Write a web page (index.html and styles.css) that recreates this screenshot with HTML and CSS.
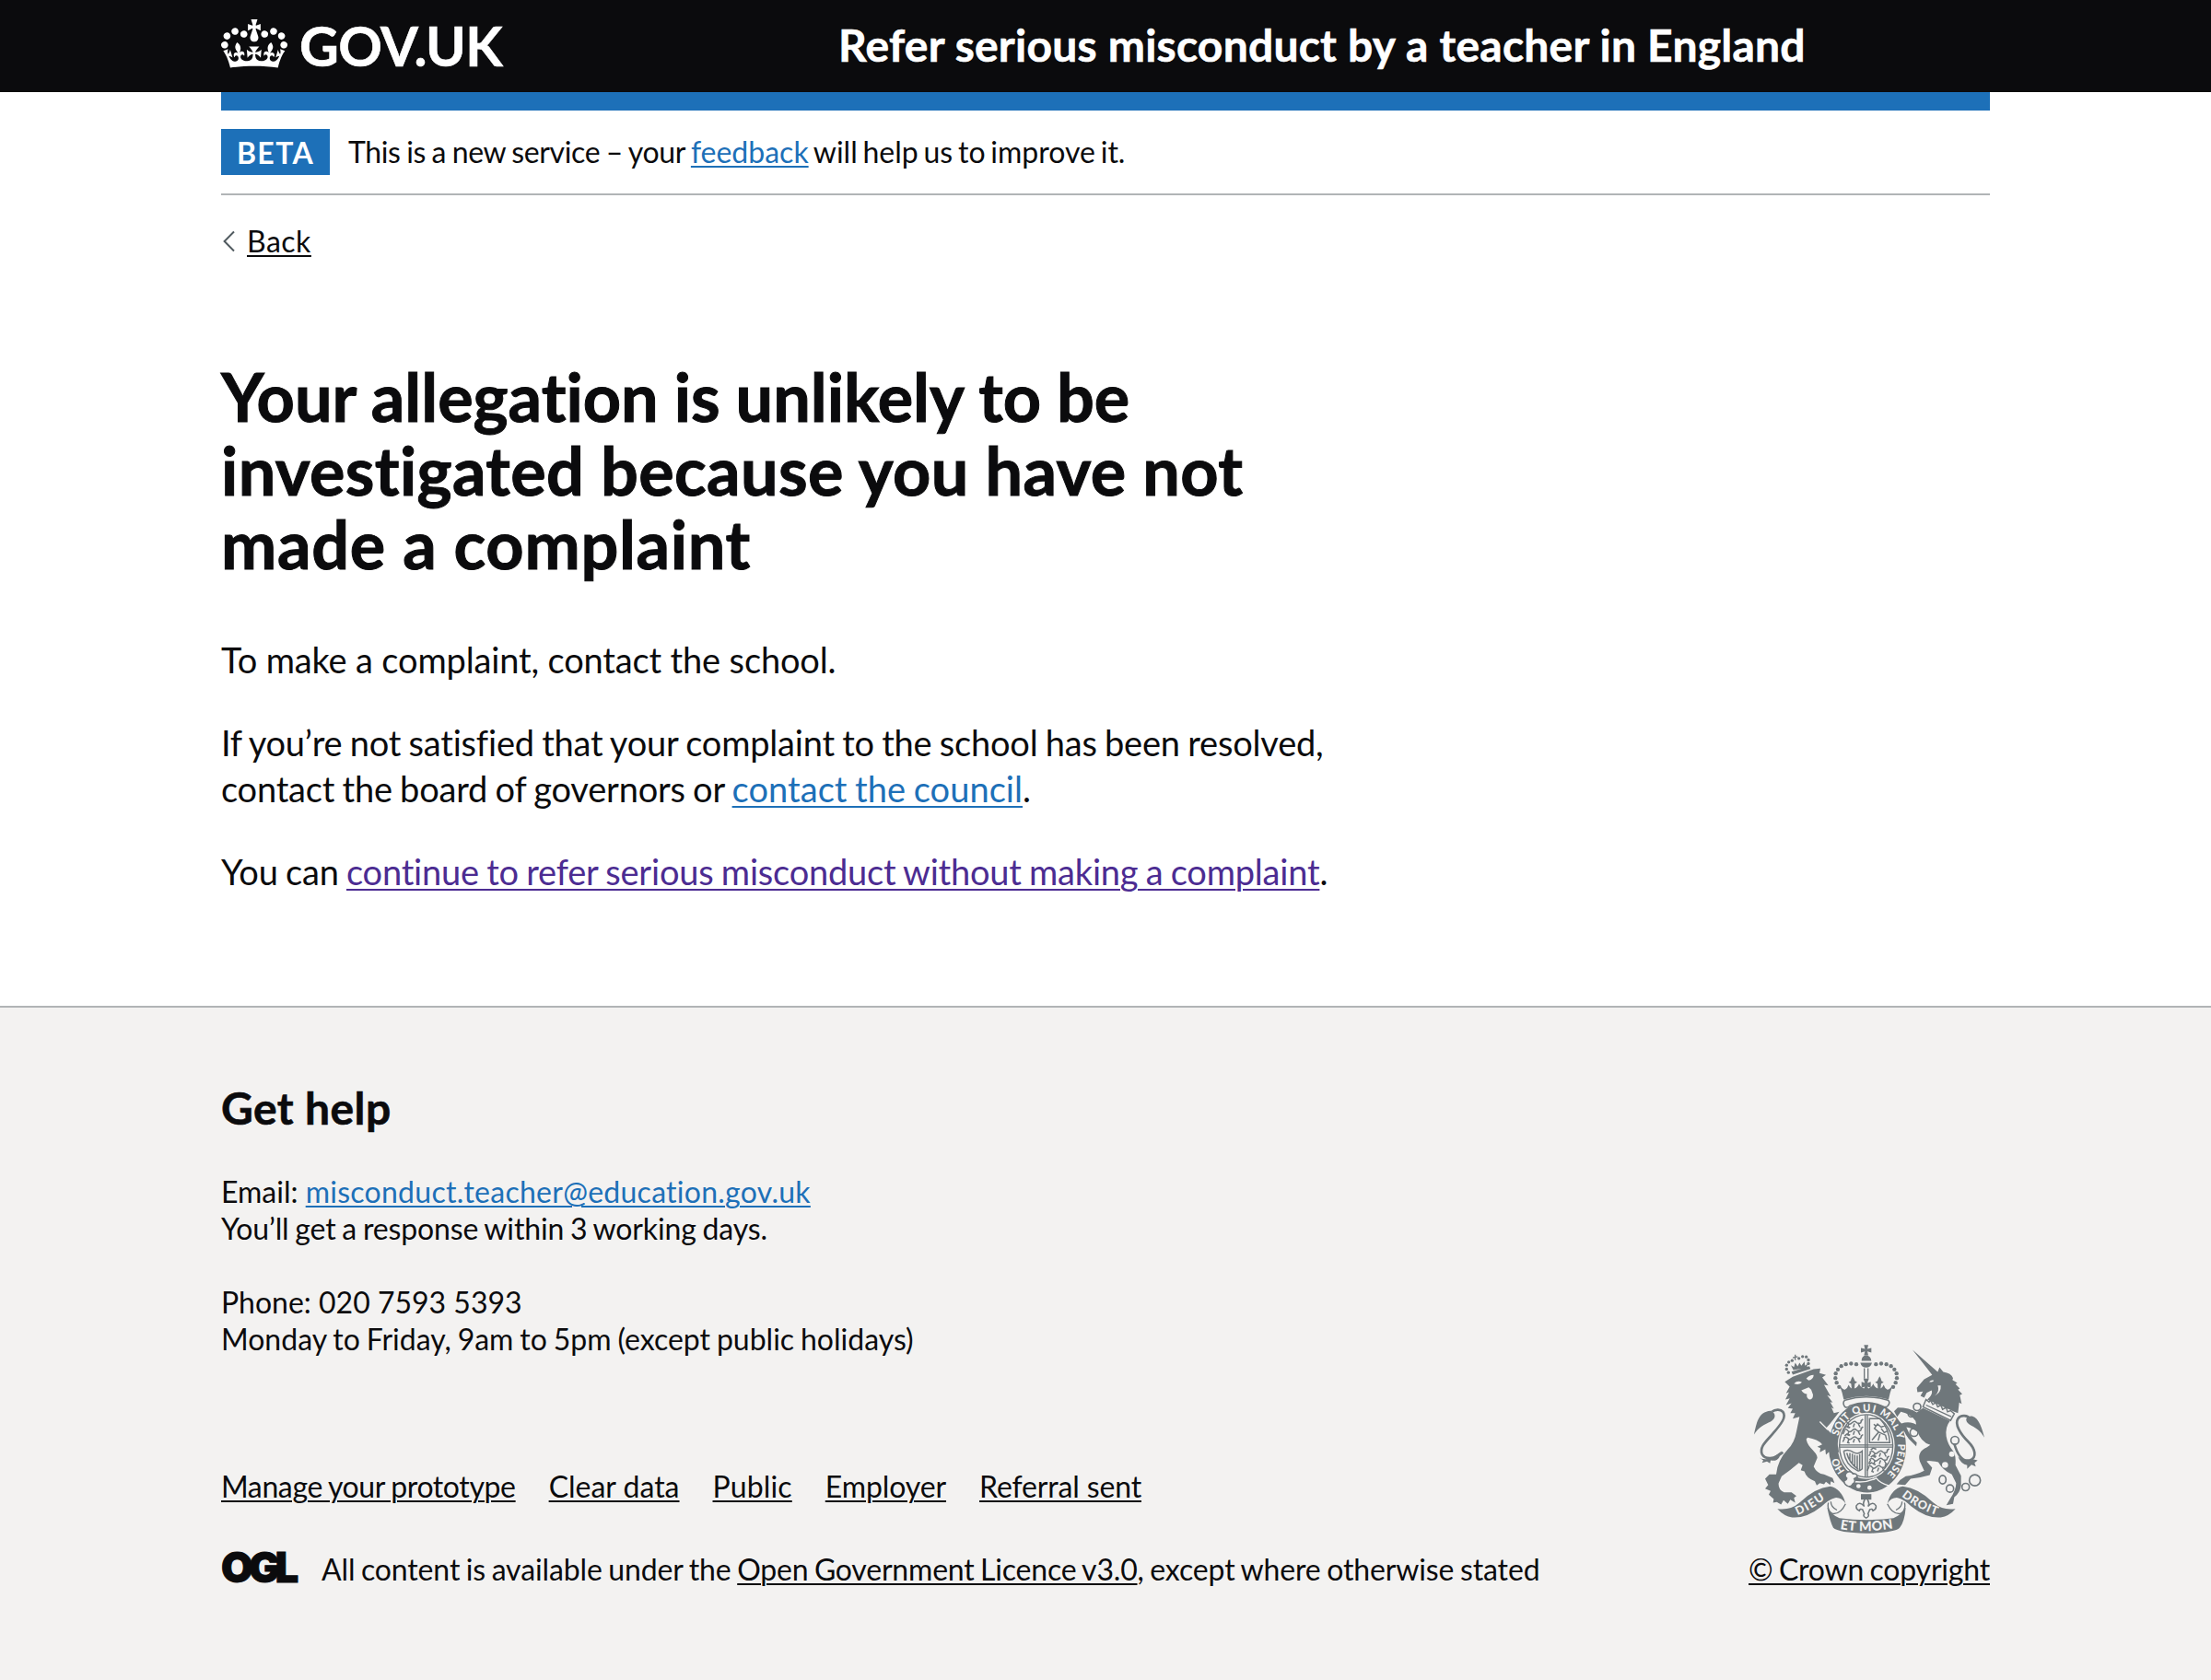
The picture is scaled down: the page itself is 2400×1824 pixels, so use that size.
FILE: index.html
```html
<!DOCTYPE html>
<html lang="en">
<head>
<meta charset="utf-8">
<title>Refer serious misconduct by a teacher in England</title>
<link rel="stylesheet" href="styles.css">
</head>
<body>
<header class="header">
  <div class="container header__row">
    <a class="header__logo" href="#">
      <svg class="header__crown" viewBox="0 0 132 97" aria-hidden="true"><path fill="currentColor" d="M25 30.2c3.5 1.5 7.7-.2 9.1-3.7 1.5-3.6-.2-7.8-3.9-9.2-3.6-1.4-7.6.3-9.1 3.9-1.4 3.5.3 7.5 3.9 9zM9 39.5c3.6 1.5 7.8-.2 9.2-3.7 1.5-3.6-.2-7.8-3.9-9.1-3.6-1.5-7.6.2-9.1 3.8-1.4 3.5.3 7.5 3.8 9zM4.4 57.2c3.5 1.5 7.7-.2 9.1-3.8 1.5-3.6-.2-7.7-3.9-9.1-3.5-1.5-7.6.3-9.1 3.8-1.4 3.5.3 7.6 3.9 9.1zm38.3-21.4c3.5 1.5 7.7-.2 9.1-3.8 1.5-3.6-.2-7.7-3.9-9.1-3.6-1.5-7.6.3-9.1 3.8-1.3 3.6.4 7.7 3.9 9.1zm64.4-5.6c-3.6 1.5-7.8-.2-9.1-3.7-1.5-3.6.2-7.8 3.8-9.2 3.6-1.4 7.7.3 9.2 3.9 1.3 3.5-.4 7.5-3.9 9zm15.9 9.3c-3.6 1.5-7.7-.2-9.1-3.7-1.5-3.6.2-7.8 3.7-9.1 3.6-1.5 7.7.2 9.2 3.8 1.5 3.5-.3 7.5-3.8 9zm4.7 17.7c-3.6 1.5-7.8-.2-9.2-3.8-1.5-3.6.2-7.7 3.9-9.1 3.6-1.5 7.7.3 9.2 3.8 1.3 3.5-.4 7.6-3.9 9.1zM89.3 35.8c-3.6 1.5-7.8-.2-9.2-3.8-1.4-3.6.2-7.7 3.9-9.1 3.6-1.5 7.7.3 9.2 3.8 1.4 3.6-.3 7.7-3.9 9.1zM69.7 17.7l8.9 4.7V9.3l-8.9 2.8c-.2-.3-.5-.6-.9-.9L72.4 0H59.6l3.5 11.2c-.3.3-.6.5-.9.9l-8.8-2.8v13.1l8.8-4.7c.3.3.6.7.9.9l-5 15.4v.1c-.2.8-.4 1.6-.4 2.4 0 4.1 3.1 7.5 7 8.1h.2c.3 0 .7.1 1 .1.4 0 .7 0 1-.1h.2c4-.6 7.1-4.1 7.1-8.1 0-.8-.1-1.7-.4-2.4V34l-5.1-15.4c.4-.2.7-.6 1-.9zM66 92.8c16.9 0 32.8 1.1 47.1 3.2 4-16.9 8.9-26.7 14-33.5l-9.6-3.4c1 4.9 1.1 7.2 0 10.2-1.5-1.4-3-4.3-4.2-8.7L108.6 76c2.8-2 5-3.2 7.5-3.3-4.4 9.4-10 11.9-13.6 11.2-4.3-.8-6.3-4.6-5.6-7.9 1-4.7 5.7-5.9 8-.5 4.3-8.7-3-11.4-7.6-8.8 7.1-7.2 7.9-13.5 2.1-21.1-8 6.1-8.1 12.3-4.5 20.8-4.7-5.4-12.1-2.5-9.5 6.2 3.4-5.2 7.9-2 7.2 3.1-.6 4.3-6.4 7.8-13.5 7.2-10.3-.9-10.9-8-11.2-13.8 2.5-.5 7.1 1.8 11 7.3L80.2 60c-4.1 4.4-8 5.3-12.3 5.4 1.4-4.4 8-11.6 8-11.6H55.5s6.4 7.2 7.9 11.6c-4.2-.1-8-1-12.3-5.4l1.4 16.4c3.9-5.5 8.5-7.7 10.9-7.3-.3 5.8-.9 12.8-11.1 13.8-7.2.6-12.9-2.9-13.5-7.2-.7-5 3.8-8.3 7.1-3.1 2.7-8.7-4.6-11.6-9.4-6.2 3.7-8.5 3.6-14.7-4.6-20.8-5.8 7.6-5 13.9 2.2 21.1-4.7-2.6-11.9.1-7.7 8.8 2.3-5.5 7.1-4.2 8.1.5.7 3.3-1.3 7.1-5.7 7.9-3.5.7-9-1.8-13.5-11.2 2.5.1 4.7 1.3 7.5 3.3l-4.7-15.4c-1.2 4.4-2.7 7.2-4.3 8.7-1.1-3-.9-5.3 0-10.2l-9.5 3.4c5 6.9 9.9 16.7 14 33.5 14.8-2.1 30.8-3.2 47.7-3.2z"/></svg>
      <span class="header__wordmark">GOV.UK</span>
    </a>
    <a class="header__service" href="#">Refer serious misconduct by a teacher in England</a>
  </div>
</header>

<div class="container">
  <div class="phase-banner">
    <strong class="phase-banner__tag">BETA</strong>
    <span class="phase-banner__text"><span class="phase-banner__intro">This is a new service – your </span><a class="link" href="#">feedback</a> will help us to improve it.</span>
  </div>
  <a class="back-link" href="#">
    <svg class="back-link__arrow" viewBox="0 0 16 26" aria-hidden="true"><path d="M14 2.5 3.6 13 14 23.5" fill="none" stroke="#505a5f" stroke-width="2"/></svg>
    <span class="back-link__text">Back</span>
  </a>
  <main class="main">
    <h1 class="heading"><span class="heading__first">Your allegation is unlikely to be</span> <span class="heading__second">investigated because you have not</span> <span class="heading__third">made a complaint</span></h1>
    <p class="body body--short">To make a complaint, contact the school.</p>
    <p class="body">If you’re not satisfied that your complaint to the school has been resolved, contact the board of governors or <a class="link link--council" href="#">contact the council</a>.</p>
    <p class="body">You can <a class="link link--visited" href="#">continue to refer serious misconduct without making a complaint</a>.</p>
  </main>
</div>

<footer class="footer">
  <div class="container footer__row">
    <div class="footer__content">
      <h2 class="footer__heading">Get help</h2>
      <p class="footer__para">Email: <a class="link link--email" href="#">misconduct.teacher@education.gov.uk</a><br><span class="footer__response">You’ll get a response within 3 working days.</span></p>
      <p class="footer__para">Phone: 020 7593 5393<br><span class="footer__hours">Monday to Friday, 9am to 5pm (except public holidays)</span></p>
      <ul class="footer__links">
        <li><a class="footer__link footer__link--manage" href="#">Manage your prototype</a></li>
        <li><a class="footer__link footer__link--clear" href="#">Clear data</a></li>
        <li><a class="footer__link footer__link--public" href="#">Public</a></li>
        <li><a class="footer__link footer__link--employer" href="#">Employer</a></li>
        <li><a class="footer__link footer__link--referral" href="#">Referral sent</a></li>
      </ul>
      <div class="licence">
        <span class="licence__logo">OGL</span>
        <span class="licence__text">All content is available under the <a class="footer__link licence__link" href="#">Open Government Licence v3.0</a>, except where otherwise stated</span>
      </div>
    </div>
    <div class="footer__copyright">
      <svg class="crest" viewBox="42 28 750 614" aria-hidden="true">
        <defs>
          <path id="motto" d="M411 475A100 115 0 0 1 411 245A100 115 0 0 1 411 475"/>
          <path id="dieu" d="M184 583 Q226 566 288 520"/>
          <path id="droit" d="M522 521 Q572 563 650 587"/>
          <path id="etmon" d="M322 627 Q407 642 498 625"/>
          <g id="passant">
            <path d="M336 276q8-8 14 0t14 0 14-2 14 2l4-10M340 276l-6 12M354 278l-4 12 6 2M372 278l-4 12M384 278l6 12M392 270l8-6M340 268l8-6 10 4"/>
          </g>
        </defs>

        <!-- garter and shield -->
        <g>
          <ellipse class="ink" cx="411" cy="361" rx="126" ry="148"/>
          <ellipse class="paper" cx="407" cy="357" rx="93" ry="108"/>
          <ellipse class="line" cx="407" cy="357" rx="87" ry="102"/>
          <path class="line" d="M404 256V458M411 256V458M320 354H494M320 361H494"/>
          <g class="line thin">
            <use href="#passant" transform="translate(-3 6)"/><use href="#passant" transform="translate(-3 31)"/><use href="#passant" transform="translate(-3 56)"/>
            <use href="#passant" transform="translate(82 102)"/><use href="#passant" transform="translate(82 126)"/><use href="#passant" transform="translate(76 150)"/>
            <path d="M418 268H452Q482 300 484 346H418ZM426 338L448 312 434 300 444 286 456 296 470 290M448 312L470 322 474 338M452 318L446 340M456 300L466 314 478 306M432 286L440 294"/>
            <path d="M334 374Q350 366 366 378 382 386 394 374V432Q384 442 376 436 340 420 334 374M344 380Q352 414 382 434M354 380V404M362 382V414M370 386V422M378 388V430M386 384V436"/>
          </g>
          <text class="motto">
            <textPath href="#motto" startOffset="84" textLength="50">HO</textPath>
            <textPath href="#motto" startOffset="204" textLength="75">SOIT</textPath>
            <textPath href="#motto" startOffset="291" textLength="72">QUI</textPath>
            <textPath href="#motto" startOffset="377" textLength="76">MAL</textPath>
            <textPath href="#motto" startOffset="460">Y</textPath>
            <textPath href="#motto" startOffset="497" textLength="108">PENSE</textPath>
          </text>
          <path class="seam" d="M350 470Q400 482 440 462 452 478 480 486"/>
          <circle class="paper" cx="382" cy="488" r="7"/><circle class="paper" cx="418" cy="493" r="7"/>
          <path class="paper outline" d="M344 444q12-8 20 4 14-2 14 10l-10 6q6 10-4 16-8 14-20 6-10-6-8-16 8-2 8-8-10-8 0-18z"/>
        </g>

        <!-- central crown -->
        <path class="ink" d="M400 28h14l-3 13 13-3v15l-13-4 3 13h-14l3-13-13 4V38l13 3z"/>
        <path class="ink" d="M392 80q0-16 15-18 15 2 17 18zM388 86h38q-4 16-19 16t-19-16z"/>
        <path class="line" d="M401 104V138M413 104V138"/>
        <g class="ink">
          <circle cx="375" cy="91" r="6.5"/><circle cx="358" cy="89" r="6.5"/><circle cx="341" cy="91" r="6.5"/><circle cx="326" cy="97" r="6.5"/><circle cx="315" cy="108" r="6.5"/><circle cx="308" cy="121" r="6.5"/><circle cx="307" cy="136" r="6.5"/><circle cx="311" cy="151" r="6.5"/><circle cx="319" cy="165" r="6.5"/>
          <circle cx="439" cy="91" r="6.5"/><circle cx="456" cy="89" r="6.5"/><circle cx="473" cy="91" r="6.5"/><circle cx="488" cy="97" r="6.5"/><circle cx="499" cy="108" r="6.5"/><circle cx="506" cy="121" r="6.5"/><circle cx="507" cy="136" r="6.5"/><circle cx="503" cy="151" r="6.5"/><circle cx="495" cy="165" r="6.5"/>
          <path d="M334 206Q330 184 320 158 330 174 338 174 346 170 350 158 354 168 360 170L358 154 350 150 357 145Q358 138 363 130 368 138 370 145L378 150 370 154 369 170Q380 166 384 154 388 166 400 170L403 164 392 168V148L403 152 398 138H416L411 152 422 148V168L411 164 414 170Q426 166 430 154 434 166 445 170L444 154 436 150 444 145Q446 138 451 130 456 138 457 145L464 150 456 154 454 170Q460 168 464 158 468 170 476 174 484 174 494 158 484 184 480 206 407 184 334 206Z"/>
        </g>
        <path class="paper outline" d="M338 208Q407 188 478 208 488 216 476 228 470 232 462 228 407 204 354 226 346 234 338 230 328 216 338 208Z"/>

        <!-- lion -->
        <path class="line tail" d="M136 378C108 402 78 402 68 384 58 360 84 340 104 316 132 284 148 262 136 246 128 236 110 238 100 246"/>
        <path class="ink" d="M42 320C50 286 54 246 96 243 114 250 114 268 96 278 78 286 56 296 42 320ZM58 394q10 10 40 4l34-24-8 20q-8 14-28 10l-2 10-10-6-16 4 4-8z"/>
        <path class="ink" d="M142 148L168 132 236 107 258 105 255 120 276 126 264 134 284 160 270 158 292 196 280 192 298 216 290 214 302 236 294 232 302 250 320 246 290 284 276 300C296 318 316 340 318 376L308 388 302 374 294 392 286 376 276 386 274 368 256 378 258 364 248 360 264 352Q250 336 216 330L212 336C218 366 248 376 248 396L236 424Q246 446 270 450L298 462 304 478 292 472 290 484 276 474 270 482 256 478 246 486 240 472Q212 462 206 440L194 436 200 420 188 412Q160 436 132 456L122 478Q120 500 140 508L164 508 180 520 172 526 176 542 160 532 152 546 138 534 130 548 116 540 104 542 106 530 90 516 96 504 78 496 88 484 78 464 92 450 114 450Q118 404 152 368 174 346 180 310L190 262 168 268 176 250 160 250 168 236 152 234 164 218 146 224 158 202 144 206 156 182 146 186 158 164Z"/>
        <path class="seam" d="M256 278L282 304"/>
        <path class="paper" d="M172 154q12-12 26-4-8 10-26 4zM212 138q10-12 24-12 0 14-16 18zM196 176l24-10 8 8 6 16q0 16-12 16-10-4-8-18-10 0-18-12z"/>
        <path class="ink" d="M164 115L222 97 226 106 168 125ZM170 110l-8-16 10 6 4-14 8 12 6-12 6 10 10-14 2 14 8-6-2 12z"/>
        <path class="line" d="M176 60V78M168 70L184 66"/>
        <g class="ink"><circle cx="154" cy="118" r="5"/><circle cx="148" cy="107" r="5"/><circle cx="148" cy="94" r="5"/><circle cx="155" cy="84" r="5"/><circle cx="166" cy="79" r="5"/><circle cx="188" cy="72" r="5"/><circle cx="200" cy="66" r="5"/><circle cx="212" cy="67" r="5"/><circle cx="219" cy="77" r="5"/><circle cx="219" cy="89" r="5"/></g>

        <!-- unicorn -->
        <path class="line tail" d="M694 350C706 392 724 408 744 404 770 396 762 366 740 344 714 318 694 286 706 268 716 254 738 258 744 268"/>
        <path class="ink" d="M792 330C786 306 776 266 752 260 732 258 726 274 742 286 762 298 780 306 792 330ZM706 392q20 16 48 8l16 4-10 8 4 12-14-6-14 14 0-12q-20-4-30-28z"/>
        <path class="ink" d="M558 44L640 116 646 101 658 116Q684 120 690 136L688 142 704 152 698 156 712 170 706 174 720 188 712 192 718 220 710 216 706 250 694 246 606 206Q626 188 620 176L604 184 596 200 584 194 592 180 574 182 572 168 596 140 622 126Z"/>
        <path class="paper" d="M612 148q8-8 16-4-4 8-16 4zM640 160q8 20-10 34 22-12 20-34z"/>
        <path class="paper outline" d="M602 206L612 214 616 208 624 222 634 216 640 230 650 224 656 238 668 232 672 246 682 242 694 252 682 274 592 230Z"/>
        <path class="line" d="M602 224L684 262"/>
        <path class="ink" d="M592 234L680 276Q664 296 668 326 672 352 692 376 700 390 698 420L716 454 716 486Q712 512 694 524L690 546 668 550 680 530Q700 500 700 478L686 450Q658 438 642 410 606 402 604 408L622 428 614 452Q580 462 552 464L534 484 506 482 518 468 536 456Q570 452 596 438L582 408Q572 376 604 362L616 354Q584 344 574 308L568 276Q552 252 520 246L508 262 498 244 510 232Q548 232 572 248Z"/>
        <path class="ink" d="M578 292Q552 274 522 284L508 270 512 290 516 300Q530 304 536 320L546 334 570 358 572 346 560 334Q544 314 538 296 560 300 574 312Z"/>
        <g class="ring"><circle cx="573" cy="230" r="12"/><circle cx="554" cy="253" r="10"/><circle cx="563" cy="313" r="13"/><circle cx="696" cy="339" r="13"/><ellipse cx="656" cy="467" rx="11" ry="14"/><circle cx="680" cy="496" r="12"/><circle cx="731" cy="491" r="12"/><circle cx="761" cy="469" r="18"/></g>
        <g class="paper"><circle cx="686" cy="384" r="9"/><circle cx="664" cy="419" r="10"/></g>

        <!-- scroll -->
        <path class="ink" d="M390 514H424V532H390Z"/>
        <path class="paper outline" d="M407 526q14 14 6 28 16-18 26-2 2 12-10 16-2-8-10-4l-6 14q6 8-6 14-12-6-6-14l-6-14q-8-4-10 4-12-4-10-16 10-16 26 2-8-14 6-28z"/>
        <path class="ink" d="M118 562Q160 568 190 542 240 494 290 489 326 496 340 544 326 524 306 526 284 532 262 554 212 594 166 590 140 586 118 562ZM698 562Q656 568 626 542 576 494 526 489 490 496 476 544 490 524 510 526 532 532 554 554 604 594 650 590 676 586 698 562Z"/>
        <path class="line" d="M284 542Q278 566 298 578 324 580 340 546M532 542Q538 566 518 578 492 580 476 546M292 538Q292 556 312 566M524 538Q524 556 504 566"/>
        <path class="ink" d="M280 558Q296 584 320 592 407 604 496 592 520 584 536 558 532 606 516 624 500 640 407 642 316 640 300 624 290 606 280 558Z"/>
        <text class="scroll"><textPath href="#dieu" textLength="104">DIEU</textPath></text>
        <text class="scroll"><textPath href="#droit" textLength="130">DROIT</textPath></text>
        <text class="scroll scroll--large"><textPath href="#etmon" textLength="174">ET MON</textPath></text>
      </svg>
      <a class="footer__link footer__crown" href="#">© Crown copyright</a>
    </div>
  </div>
</footer>
</body>
</html>
```

FILE: styles.css
```css
* { box-sizing: border-box; }

html, body { height: 100%; }

body {
  margin: 0;
  display: flex;
  flex-direction: column;
  background: #fff;
  color: #0b0b0d;
  font-family: Lato, "Liberation Sans", sans-serif;
  font-size: 32px;
  line-height: 40px;
  font-variant-ligatures: none;
}

h1, h2, p, ul { margin: 0; padding: 0; }

.container {
  width: 1920px;
  margin: 0 auto;
}

/* Header */
.header {
  height: 100px;
  flex: none;
  background: #0b0b0d;
  color: #fff;
}

.header__row {
  display: grid;
  grid-template-columns: 670px 1fr;
  height: 120px;
  border-bottom: 20px solid #1d70b8;
}

.header__row a { color: inherit; text-decoration: none; }

.header__logo {
  display: flex;
  gap: 13px;
  padding-top: 21px;
}

.header__crown { width: 72px; height: 53px; }

.header__wordmark {
  font-size: 59px;
  font-weight: 700;
  line-height: 58px;
  letter-spacing: -0.5px;
  -webkit-text-stroke: 0.6px;
}

.header__service {
  font-size: 48px;
  font-weight: 700;
  line-height: 60px;
  padding-top: 19px;
  letter-spacing: 0.23px;
  white-space: nowrap;
  -webkit-text-stroke: 0.6px;
}

/* Phase banner */
.phase-banner {
  display: flex;
  align-items: center;
  gap: 20px;
  height: 112px;
  padding: 40px 0 20px;
  border-bottom: 2px solid #b1b4b6;
}

.phase-banner__tag {
  width: 118px;
  height: 50px;
  padding-top: 6px;
  background: #1d70b8;
  color: #fff;
  letter-spacing: 1.4px;
  text-align: center;
}

.phase-banner__text { word-spacing: -2.4px; }
.phase-banner__intro { letter-spacing: -0.35px; word-spacing: -1.3px; }

/* Links */
.link, .footer__link, .back-link__text {
  color: #1d70b8;
  text-decoration: underline;
  text-decoration-thickness: 2px;
  text-underline-offset: 3px;
}

.link--visited { color: #4c2c92; }
.link--email { letter-spacing: 0.26px; }
.body .link { text-underline-offset: 4px; }

.back-link {
  display: flex;
  width: max-content;
  margin-top: 30px;
  gap: 12px;
  text-decoration: none;
}

.back-link__arrow { width: 16px; height: 26px; margin-top: 7px; }
.back-link__text { color: #0b0b0d; letter-spacing: 0.5px; }

/* Main */
.main {
  width: 1250px;
  padding: 108px 0 121px;
}

.heading {
  font-size: 72px;
  font-weight: 700;
  line-height: 80px;
  margin-bottom: 61px;
  -webkit-text-stroke: 1px;
}

.heading__first { word-spacing: -0.5px; }
.heading__second { letter-spacing: 0.35px; }
.heading__third { letter-spacing: 0.7px; }

.body {
  font-size: 38px;
  line-height: 50px;
  letter-spacing: -0.2px;
  word-spacing: -1.2px;
}

.body + .body { margin-top: 40px; }
.body--short { letter-spacing: -0.15px; word-spacing: 0; }
.link--council { letter-spacing: 0.05px; }

/* Footer */
.footer {
  flex: 1;
  border-top: 2px solid #b1b4b6;
  background: #f3f2f1;
}

.footer__row {
  display: flex;
  justify-content: space-between;
  align-items: flex-end;
  padding-top: 79px;
}

.footer__heading {
  font-size: 48px;
  line-height: 60px;
  letter-spacing: 0.4px;
  margin-bottom: 41px;
  -webkit-text-stroke: 0.6px;
}

.footer__para { margin-bottom: 40px; }
.footer__response { letter-spacing: -0.15px; word-spacing: -1.2px; }
.footer__hours { word-spacing: -1.3px; }
.footer__link { color: #0b0b0d; }

.footer__links {
  display: flex;
  gap: 36px;
  margin: 120px 0 50px;
  list-style: none;
}

.footer__link--manage { letter-spacing: -0.38px; word-spacing: -1px; }
.footer__link--public { letter-spacing: 0.15px; }
.footer__link--employer { letter-spacing: -0.1px; }
.footer__link--referral { letter-spacing: -0.15px; }

.licence { display: flex; }

.licence__logo {
  width: 109px;
  font-family: Inter, sans-serif;
  font-size: 45px;
  font-weight: 900;
  line-height: 35px;
  letter-spacing: -5px;
  -webkit-text-stroke: 1px;
}

.licence__text { letter-spacing: -0.12px; word-spacing: -1.5px; }
.licence__link { letter-spacing: -0.2px; }

.footer__copyright {
  display: flex;
  flex-direction: column;
  align-items: center;
  gap: 19px;
}

.footer__crown { letter-spacing: -0.2px; word-spacing: -1.5px; }

/* Royal coat of arms */
.crest { width: 250px; height: 205px; }
.ink { fill: #6f777b; }
.paper { fill: #f3f2f1; }
.line { fill: none; stroke: #6f777b; stroke-width: 4; }
.thin { stroke-width: 4.5; }
.tail { stroke-width: 8; }
.outline { stroke: #6f777b; stroke-width: 4.5; }
.seam { fill: none; stroke: #f3f2f1; stroke-width: 4; }
.ring { fill: none; stroke: #6f777b; stroke-width: 5; }

.motto, .scroll {
  fill: #f3f2f1;
  font-family: Lato, sans-serif;
  font-weight: 900;
}

.motto { font-size: 33px; }
.scroll { font-size: 38px; }
.scroll--large { font-size: 43px; }
```
